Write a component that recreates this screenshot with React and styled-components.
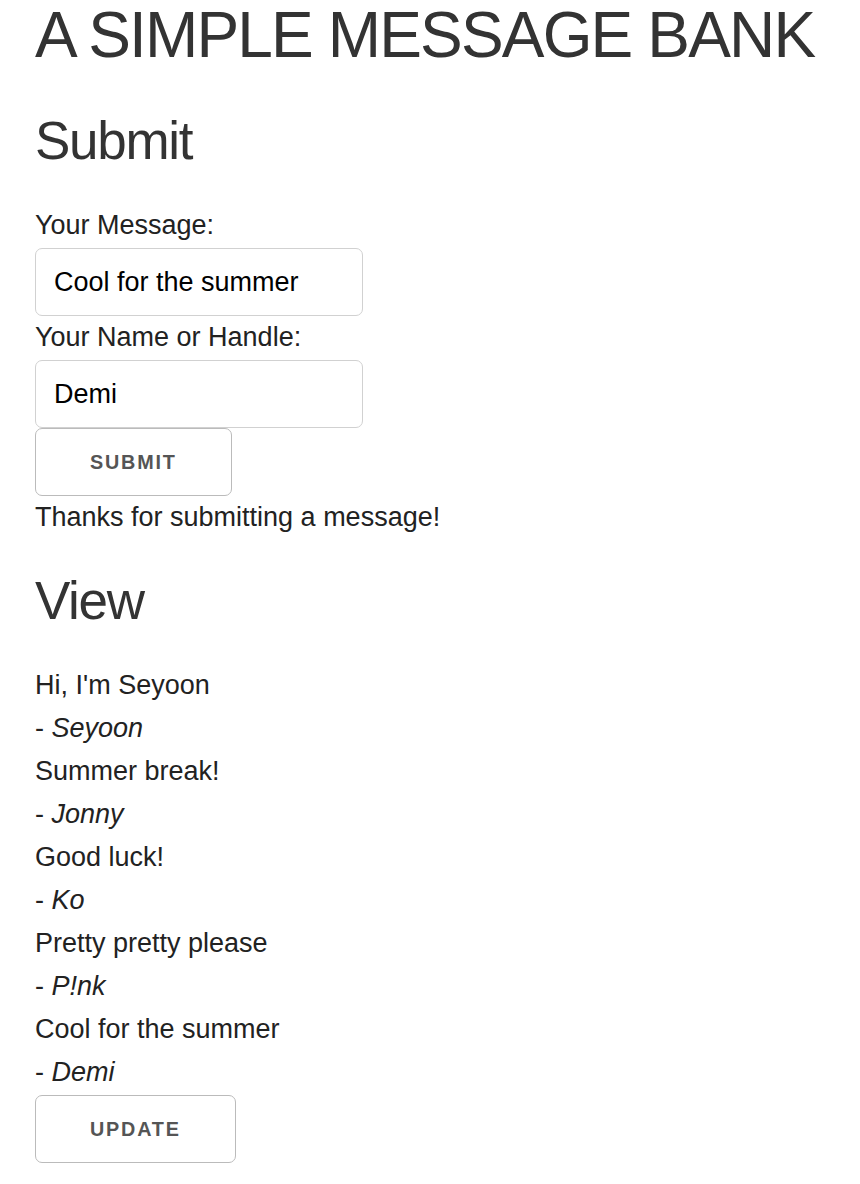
import { useState } from "react";
import styled, { createGlobalStyle } from "styled-components";

const GlobalStyle = createGlobalStyle`
    body {
        margin: 0;
        background: #fff;
        color: #222;
        font-family: "Liberation Sans", Arial, Helvetica, sans-serif;
        font-size: 27px;
        line-height: 1.6;
    }
`;

const Page = styled.main`
    padding: 3px 35px 0;
`;

const Title = styled.h1`
    margin: 0;
    font-size: 64px;
    line-height: 64px;
    font-weight: 400;
    letter-spacing: -1.85px;
    color: #333;
`;

const Heading = styled.h2`
    margin: ${(p) => p.$top}px 0 30px;
    font-size: 53px;
    line-height: 66px;
    font-weight: 400;
    letter-spacing: -1.3px;
    color: #333;
`;

const Form = styled.form`
    display: flex;
    flex-direction: column;
    align-items: flex-start;
`;

const Label = styled.label`
    display: block;
    line-height: 43px;
    margin-bottom: 1px;
    color: #222;
`;

const Input = styled.input`
    box-sizing: border-box;
    width: 328px;
    height: 68px;
    padding: 6px 18px;
    margin: 0;
    border: 1px solid #d1d1d1;
    border-radius: 7px;
    font-family: inherit;
    font-size: 27px;
    color: #000;
    background: #fff;
    outline: none;
`;

const Button = styled.button`
    box-sizing: border-box;
    height: 68px;
    margin-top: ${(p) => p.$top || 0}px;
    padding: 0 54px;
    border: 1px solid #bbb;
    border-radius: 7px;
    background: transparent;
    color: #555;
    font-family: inherit;
    font-size: 19.8px;
    font-weight: 700;
    letter-spacing: 1.8px;
    text-transform: uppercase;
    cursor: pointer;
`;

const Line = styled.p`
    margin: 0;
    line-height: 43px;
`;

const Messages = styled.div`
    display: flex;
    flex-direction: column;
    align-items: flex-start;
`;

const Author = styled.i`
    font-style: italic;
`;

const initial = [
    { text: "Hi, I'm Seyoon", name: "Seyoon" },
    { text: "Summer break!", name: "Jonny" },
    { text: "Good luck!", name: "Ko" },
    { text: "Pretty pretty please", name: "P!nk" },
    { text: "Cool for the summer", name: "Demi" },
];

export default function App() {
    const [message, setMessage] = useState("Cool for the summer");
    const [name, setName] = useState("Demi");
    const [messages] = useState(initial);

    return (
        <Page>
            <GlobalStyle />
            <Title>A SIMPLE MESSAGE BANK</Title>
            <Heading $top={41}>Submit</Heading>
            <Form onSubmit={(e) => e.preventDefault()}>
                <Label htmlFor="msg">Your Message:</Label>
                <Input id="msg" value={message} onChange={(e) => setMessage(e.target.value)} />
                <Label htmlFor="name">Your Name or Handle:</Label>
                <Input id="name" value={name} onChange={(e) => setName(e.target.value)} />
                <Button type="submit">Submit</Button>
                <Line>Thanks for submitting a message!</Line>
            </Form>
            <Heading $top={29}>View</Heading>
            <Messages>
                {messages.map((m) => (
                    <div key={m.name}>
                        <Line>{m.text}</Line>
                        <Line>- <Author>{m.name}</Author></Line>
                    </div>
                ))}
                <Button type="button" $top={1}>Update</Button>
            </Messages>
        </Page>
    );
}
